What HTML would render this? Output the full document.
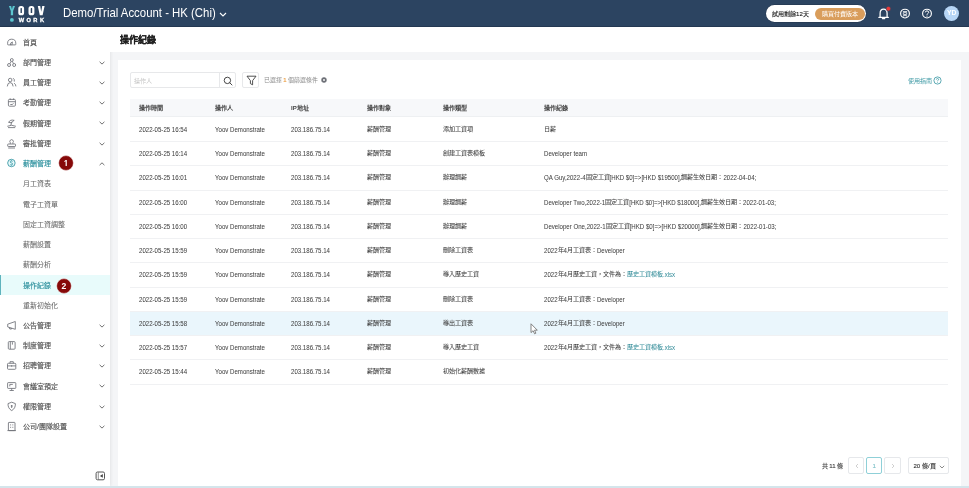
<!DOCTYPE html>
<html lang="zh-HK"><head><meta charset="utf-8">
<style>
*{box-sizing:border-box;margin:0;padding:0}
html,body{width:969px;height:488px;overflow:hidden;background:#f4f5f7;font-family:"Liberation Sans",sans-serif;position:relative}
#wrap{position:absolute;left:0;top:0;width:969px;height:488px;will-change:transform}
#hdr{position:absolute;left:0;top:0;width:969px;height:27.2px;background:#2c4461;border-bottom:1px solid #243852}
#side{position:absolute;left:0;top:27px;width:110px;height:459px;background:#fff;box-shadow:1px 0 3px rgba(0,0,0,0.07)}
#bstrip{position:absolute;left:0;top:485.6px;width:969px;height:2.4px;background:#d4e5eb;}
#phdr{position:absolute;left:110px;top:27px;width:859px;height:25px;background:#fff;}
#phdr .tt{position:absolute;left:10px;top:8.1px;font-size:9px;line-height:10px;font-weight:bold;color:#1f1f1f;-webkit-text-stroke:0.2px currentColor}
#card{position:absolute;left:117.5px;top:60.2px;width:843.5px;height:426px;background:#fff;}
.mi{position:absolute;left:0;width:110px;height:20.2px;font-size:7px;font-weight:500;color:#4f4f4f;}
.mi .t{position:absolute;left:23px;top:6.3px;line-height:8px;white-space:nowrap;-webkit-text-stroke:0.14px currentColor}
.mi .ic{position:absolute;left:6px;top:4.1px}
.mi .chev{position:absolute;left:98.5px;top:8px}
.mi.act{color:#2a8f9c}
.mi.sub{color:#6a6a6a}
.mi.sub .t{-webkit-text-stroke:0.05px currentColor}
.mi.sel{background:#e8fbfb;color:#2a8f9c;border-left:1px solid #5fb3bd}
.mi.sel .t{left:22px}
.th{position:absolute;top:98.5px;left:130px;width:818px;height:18.5px;background:#f7f8fa;border-bottom:0.8px solid #eef0f2}
.hc{position:absolute;top:0;line-height:18px;font-size:6.1px;font-weight:bold;color:#454545;white-space:nowrap}
.row{position:absolute;left:130px;width:818px;height:24.27px;border-bottom:1px solid #f0f1f3;background:#fff}
.row.hov{background:#eaf6fc}
.c{position:absolute;top:0;line-height:23.2px;font-size:6.1px;transform:scaleY(1.13);transform-origin:0 11.6px;color:#404040;white-space:nowrap;-webkit-text-stroke:0.03px currentColor}
.c .k{font-style:normal;-webkit-text-stroke:0.06px currentColor;display:inline-block;transform:scaleY(0.885);line-height:7px;vertical-align:1px}
.lk{color:#3a909c}
.badge{position:absolute;width:15px;height:15px;border-radius:50%;background:#8a0f10;color:#fff;font-size:8.5px;font-weight:bold;text-align:center;line-height:15px}

#hdr .ttl{position:absolute;left:63px;top:6.5px;font-size:11.4px;line-height:13px;color:#fff;white-space:nowrap;transform:scaleY(1.07);transform-origin:0 6.5px}
.pill{position:absolute;left:765.8px;top:5px;width:100px;box-shadow:0 0 0 0.5px #22344c;height:17px;border-radius:9px;background:#fff}
.pill .pt{position:absolute;left:6.3px;top:4.5px;-webkit-text-stroke:0.12px currentColor;font-size:6.1px;line-height:7px;color:#222;white-space:nowrap}
.pill .pb{position:absolute;left:49.3px;top:3px;width:49.5px;height:11.5px;border-radius:6px;background:#d99d5b;color:#fff;font-size:6.1px;line-height:11.5px;text-align:center;white-space:nowrap}
.av{position:absolute;left:944.3px;top:6.2px;width:14.8px;height:14.8px;border-radius:50%;background:#b6d5f5;color:#fff;font-size:6.8px;font-weight:bold;line-height:14.8px;text-align:center}

.inp{position:absolute;left:129.8px;top:72.2px;width:106.2px;height:16.2px;border:0.8px solid #e7e8ea;border-radius:2px;background:#fff}
.inp .ph{position:absolute;left:3.6px;top:3.6px;font-size:6.1px;line-height:7px;color:#c4c4c4;white-space:nowrap}
.inp .sb{position:absolute;left:88.7px;top:0;width:16.7px;height:14.6px;border-left:0.8px solid #e7e8ea}
.fb{position:absolute;left:242.3px;top:72.2px;width:16.8px;height:16.2px;border:0.8px solid #e7e8ea;border-radius:2px;background:#fff}
.flt{position:absolute;left:263.7px;top:76.6px;font-size:5.9px;line-height:7px;color:#8c8c8c;white-space:nowrap}
.guide{position:absolute;left:907.8px;top:76.8px;font-size:6.1px;line-height:7px;color:#3f9aa5;white-space:nowrap}

.pg{position:absolute;font-size:6.1px;line-height:7px;white-space:nowrap}
.pbx{position:absolute;top:457.4px;width:16.2px;height:16.3px;border:0.8px solid #e6e8eb;border-radius:2px;background:#fff}
.pbx span{position:absolute;left:0;right:0;top:3.9px;-webkit-text-stroke:0.1px currentColor;text-align:center;font-size:6.1px;line-height:7px;white-space:nowrap}
.pbx.cur{border-color:#8fd0d8}
.pbx.cur span{color:#7ec0c8}
</style></head><body><div id="wrap">

<div id="hdr">
 <svg style="position:absolute;left:0;top:0" width="50" height="27" viewBox="0 0 50 27">
  <path d="M8.9 5.9 H11.1 L11.95 9.3 L12.8 5.9 H15 L13.1 11.0 V15.3 H10.8 V11.0 Z" fill="#5cc6cf"/>
  <rect x="19.4" y="7.0" width="3.6" height="7.2" rx="1.5" fill="none" stroke="#fff" stroke-width="2.2"/>
  <rect x="29.6" y="7.0" width="3.7" height="7.2" rx="1.5" fill="none" stroke="#fff" stroke-width="2.2"/>
  <path d="M37.8 5.9 H40.2 L41.2 11.8 L42.2 5.9 H44.6 L42.6 15.3 H39.8 Z" fill="#fff"/>
  <circle cx="11.9" cy="19.9" r="1.9" fill="#5cc6cf"/>
  <text x="18.7" y="22" font-family="Liberation Sans" font-weight="bold" font-size="5.7" fill="#fff" stroke="#fff" stroke-width="0.3" textLength="25.3" lengthAdjust="spacing">WORK</text>
 </svg>
 <span class="ttl">Demo/Trial Account - HK (Chi)</span>
 <svg style="position:absolute;left:219.3px;top:11.5px" width="8" height="5" viewBox="0 0 8 5"><path d="M1 1 L4 4 L7 1" fill="none" stroke="#fff" stroke-width="1.1"/></svg>
 <div class="pill"><span class="pt">試用剩餘12天</span><span class="pb">購買付費版本</span></div>
 <svg style="position:absolute;left:876px;top:5px" width="16" height="16" viewBox="0 0 16 16">
  <path d="M2.9 12.4 H12.3 M4.1 12.2 V8.4 Q4.1 4.2 7.6 4.2 Q11.1 4.2 11.1 8.4 V12.2 M6.4 13.6 H8.8" fill="none" stroke="#fff" stroke-width="1.25" stroke-linecap="round" stroke-linejoin="round"/>
  <circle cx="12.4" cy="3.7" r="2.3" fill="#e83b3b" stroke="#2c4461" stroke-width="0.5"/>
 </svg>
 <svg style="position:absolute;left:899px;top:8px" width="12" height="12" viewBox="0 0 12 12">
  <circle cx="6" cy="5.6" r="4.4" fill="none" stroke="#fff" stroke-width="1.15"/>
  <path d="M3.9 3.5 H8.1 M4.3 4.6 H7.7 V6.4 H4.3 Z M6 6.4 V7.4 M4.1 7.6 H7.9 M4.6 8 L4.2 8.6 M7.4 8 L7.8 8.6" fill="none" stroke="#fff" stroke-width="0.75"/>
 </svg>
 <svg style="position:absolute;left:921.4px;top:8px" width="12" height="12" viewBox="0 0 12 12">
  <circle cx="6" cy="5.6" r="4.4" fill="none" stroke="#fff" stroke-width="1.15"/>
  <path d="M4.3 4.4 Q4.3 2.9 6 2.9 Q7.7 2.9 7.7 4.3 Q7.7 5.2 6.7 5.6 Q6 5.9 6 6.8" fill="none" stroke="#fff" stroke-width="1"/>
  <circle cx="6" cy="8.1" r="0.6" fill="#fff"/>
 </svg>
 <div class="av">YD</div>
</div>

<div id="side">
</div>
<div id="sidebox" style="position:absolute;left:0;top:0">
<div class="mi" style="top:32.50px"><svg class="ic" width="11" height="11" viewBox="0 0 11 11"><path d="M1.6 7.3 V6.3 A4.1 4.1 0 0 1 9.8 6.3 V7.3 Q9.8 7.9 9.2 7.9 H2.2 Q1.6 7.9 1.6 7.3 Z" fill="none" stroke="#6e7077" stroke-width="0.85" stroke-linejoin="round"/><path d="M4.3 7.8 Q4.3 5.2 6.2 5.0 M5.9 7.8 L6.4 5.6" fill="none" stroke="#6e7077" stroke-width="0.85" stroke-linecap="round"/></svg><span class="t">首頁</span></div>
<div class="mi" style="top:52.73px"><svg class="ic" width="11" height="11" viewBox="0 0 11 11"><circle cx="5.8" cy="3.0" r="1.45" fill="none" stroke="#6e7077" stroke-width="0.85"/><circle cx="3.05" cy="8.0" r="1.5" fill="none" stroke="#6e7077" stroke-width="0.85"/><circle cx="8.15" cy="8.0" r="1.5" fill="none" stroke="#6e7077" stroke-width="0.85"/><path d="M5.1 4.3 L4.1 6.6 M6.5 4.3 L7.3 6.6" stroke="#6e7077" stroke-width="0.8"/></svg><span class="t">部門管理</span><svg class="chev" width="6" height="4" viewBox="0 0 6 4"><path d="M0.6 0.8 L3 3.1 L5.4 0.8" fill="none" stroke="#6a6a6a" stroke-width="0.95"/></svg></div>
<div class="mi" style="top:72.96px"><svg class="ic" width="11" height="11" viewBox="0 0 11 11"><circle cx="4.2" cy="3.0" r="1.75" fill="none" stroke="#6e7077" stroke-width="0.85"/><path d="M1.3 9.4 Q1.5 5.6 4.2 5.6 Q6.9 5.6 7.1 9.4" fill="none" stroke="#6e7077" stroke-width="0.85"/><path d="M7.1 1.2 Q8.7 1.9 8.3 4.6 M8.1 6.2 Q9.8 7 9.9 9.4" fill="none" stroke="#6e7077" stroke-width="0.85"/></svg><span class="t">員工管理</span><svg class="chev" width="6" height="4" viewBox="0 0 6 4"><path d="M0.6 0.8 L3 3.1 L5.4 0.8" fill="none" stroke="#6a6a6a" stroke-width="0.95"/></svg></div>
<div class="mi" style="top:93.19px"><svg class="ic" width="11" height="11" viewBox="0 0 11 11"><rect x="2.4" y="2.4" width="7" height="6.8" rx="1" fill="none" stroke="#6e7077" stroke-width="0.85"/><path d="M2.4 4.7 H9.4 M4.2 1.4 V3 M7.6 1.4 V3 M4.3 7.5 H6.4 L7.4 6.3" fill="none" stroke="#6e7077" stroke-width="0.85"/></svg><span class="t">考勤管理</span><svg class="chev" width="6" height="4" viewBox="0 0 6 4"><path d="M0.6 0.8 L3 3.1 L5.4 0.8" fill="none" stroke="#6a6a6a" stroke-width="0.95"/></svg></div>
<div class="mi" style="top:113.42px"><svg class="ic" width="11" height="11" viewBox="0 0 11 11"><path d="M2.6 4.4 Q4.2 1.2 8.2 2.4 Q6.4 3 5.8 4.8 Z" fill="none" stroke="#6e7077" stroke-width="0.85"/><path d="M5.6 3.8 L4.9 7.2" stroke="#6e7077" stroke-width="0.85"/><path d="M1.3 8.3 Q5.5 6.2 9.9 8.3 M2 9.6 H9.2" fill="none" stroke="#6e7077" stroke-width="0.85"/></svg><span class="t">假期管理</span><svg class="chev" width="6" height="4" viewBox="0 0 6 4"><path d="M0.6 0.8 L3 3.1 L5.4 0.8" fill="none" stroke="#6a6a6a" stroke-width="0.95"/></svg></div>
<div class="mi" style="top:133.65px"><svg class="ic" width="11" height="11" viewBox="0 0 11 11"><path d="M4.3 5.8 V4.6 A1.75 1.75 0 1 1 6.9 4.6 V5.8" fill="none" stroke="#6e7077" stroke-width="0.85"/><rect x="1.7" y="6" width="7.8" height="2.5" rx="0.6" fill="none" stroke="#6e7077" stroke-width="0.85"/><path d="M2.2 10 H9" stroke="#6e7077" stroke-width="0.85"/></svg><span class="t">審批管理</span><svg class="chev" width="6" height="4" viewBox="0 0 6 4"><path d="M0.6 0.8 L3 3.1 L5.4 0.8" fill="none" stroke="#6a6a6a" stroke-width="0.95"/></svg></div>
<div class="mi act" style="top:153.88px"><svg class="ic" width="11" height="11" viewBox="0 0 11 11"><circle cx="5.4" cy="5.0" r="3.75" fill="#e6f8fa" stroke="#2a8f9c" stroke-width="0.8"/><path d="M6.6 3.5 Q6.3 3 5.4 3 Q4.3 3 4.3 3.9 Q4.3 4.7 5.4 4.9 Q6.6 5.1 6.6 6 Q6.5 6.9 5.4 6.9 Q4.5 6.9 4.2 6.4 M5.4 2.3 V3 M5.4 6.9 V7.6" fill="none" stroke="#2a8f9c" stroke-width="0.75"/></svg><span class="t">薪酬管理</span><svg class="chev" width="6" height="4" viewBox="0 0 6 4"><path d="M0.6 3.1 L3 0.8 L5.4 3.1" fill="none" stroke="#6a6a6a" stroke-width="0.95"/></svg></div>
<div class="mi sub" style="top:174.11px"><span class="t">月工資表</span></div>
<div class="mi sub" style="top:194.34px"><span class="t">電子工資單</span></div>
<div class="mi sub" style="top:214.57px"><span class="t">固定工資調整</span></div>
<div class="mi sub" style="top:234.80px"><span class="t">薪酬設置</span></div>
<div class="mi sub" style="top:255.03px"><span class="t">薪酬分析</span></div>
<div class="mi sel" style="top:275.26px"><span class="t">操作紀錄</span></div>
<div class="mi sub" style="top:295.49px"><span class="t">重新初始化</span></div>
<div class="mi" style="top:315.72px"><svg class="ic" width="11" height="11" viewBox="0 0 11 11"><path d="M1.7 4.2 L9.3 1.5 V9.3 L1.7 6.9 Z" fill="none" stroke="#6e7077" stroke-width="0.85" stroke-linejoin="round"/><path d="M3.2 7.4 L3.8 9.0 H5.5 L5.1 8" fill="none" stroke="#6e7077" stroke-width="0.85" stroke-linejoin="round"/></svg><span class="t">公告管理</span><svg class="chev" width="6" height="4" viewBox="0 0 6 4"><path d="M0.6 0.8 L3 3.1 L5.4 0.8" fill="none" stroke="#6a6a6a" stroke-width="0.95"/></svg></div>
<div class="mi" style="top:335.95px"><svg class="ic" width="11" height="11" viewBox="0 0 11 11"><rect x="2.3" y="1.6" width="6.8" height="7.6" rx="0.9" fill="none" stroke="#6e7077" stroke-width="0.85"/><path d="M4.3 1.6 V9.2 M6.4 2.2 V4.6" stroke="#6e7077" stroke-width="0.85"/></svg><span class="t">制度管理</span><svg class="chev" width="6" height="4" viewBox="0 0 6 4"><path d="M0.6 0.8 L3 3.1 L5.4 0.8" fill="none" stroke="#6a6a6a" stroke-width="0.95"/></svg></div>
<div class="mi" style="top:356.18px"><svg class="ic" width="11" height="11" viewBox="0 0 11 11"><rect x="1.5" y="3.3" width="8.3" height="6" rx="0.9" fill="none" stroke="#6e7077" stroke-width="0.85"/><path d="M4 3.3 V1.7 H7.3 V3.3 M1.5 5.9 H9.8 M5.65 5.2 V6.7" fill="none" stroke="#6e7077" stroke-width="0.85"/></svg><span class="t">招聘管理</span><svg class="chev" width="6" height="4" viewBox="0 0 6 4"><path d="M0.6 0.8 L3 3.1 L5.4 0.8" fill="none" stroke="#6a6a6a" stroke-width="0.95"/></svg></div>
<div class="mi" style="top:376.41px"><svg class="ic" width="11" height="11" viewBox="0 0 11 11"><rect x="1.6" y="1.6" width="8.2" height="5.8" rx="0.6" fill="none" stroke="#6e7077" stroke-width="0.85"/><path d="M5.7 7.4 V9.4 M3.6 9.5 H7.8 M3.8 5.4 V3.4 H6.8" fill="none" stroke="#6e7077" stroke-width="0.85"/></svg><span class="t">會議室預定</span><svg class="chev" width="6" height="4" viewBox="0 0 6 4"><path d="M0.6 0.8 L3 3.1 L5.4 0.8" fill="none" stroke="#6a6a6a" stroke-width="0.95"/></svg></div>
<div class="mi" style="top:396.64px"><svg class="ic" width="11" height="11" viewBox="0 0 11 11"><path d="M5.7 1.2 L9.4 2.6 Q9.6 7.4 5.7 9.6 Q1.8 7.4 2 2.6 Z" fill="none" stroke="#6e7077" stroke-width="0.85" stroke-linejoin="round"/><circle cx="5.7" cy="4.9" r="0.95" fill="#6e7077"/><path d="M5.7 5.4 V7" stroke="#6e7077" stroke-width="0.9"/></svg><span class="t">權限管理</span><svg class="chev" width="6" height="4" viewBox="0 0 6 4"><path d="M0.6 0.8 L3 3.1 L5.4 0.8" fill="none" stroke="#6a6a6a" stroke-width="0.95"/></svg></div>
<div class="mi" style="top:416.87px"><svg class="ic" width="11" height="11" viewBox="0 0 11 11"><rect x="2.4" y="1.4" width="6.6" height="8.2" rx="0.6" fill="none" stroke="#6e7077" stroke-width="0.85"/><path d="M4.6 3.4 V4.4 M6.8 3.4 V4.4 M4.6 5.8 V6.8 M6.8 5.8 V6.8 M1.4 9.6 H10" fill="none" stroke="#6e7077" stroke-width="0.85"/></svg><span class="t">公司/團隊設置</span><svg class="chev" width="6" height="4" viewBox="0 0 6 4"><path d="M0.6 0.8 L3 3.1 L5.4 0.8" fill="none" stroke="#6a6a6a" stroke-width="0.95"/></svg></div>
</div>
<div id="phdr"><span class="tt">操作紀錄</span></div>
<div id="card"></div>
<div class="inp"><span class="ph">操作人</span><div class="sb"><svg width="10" height="10" viewBox="0 0 10 10" style="position:absolute;left:3px;top:3px"><circle cx="4.4" cy="4.4" r="3.2" fill="none" stroke="#333" stroke-width="0.9"/><path d="M6.8 6.8 L9 9" stroke="#333" stroke-width="0.9" stroke-linecap="round"/></svg></div></div>
<div class="fb"><svg width="11" height="11" viewBox="0 0 11 11" style="position:absolute;left:2.4px;top:2.2px"><path d="M1 1.2 H10 L6.6 5.6 V9.8 L4.4 8.6 V5.6 Z" fill="none" stroke="#333" stroke-width="0.85" stroke-linejoin="round"/></svg></div>
<span class="flt">已選擇 <span style="color:#eda24a;-webkit-text-stroke:0.2px #eda24a">1</span> 個篩選條件</span>
<svg style="position:absolute;left:321px;top:77.3px" width="6" height="6" viewBox="0 0 6 6"><circle cx="3" cy="3" r="2.7" fill="#6b6e75"/><path d="M1.9 1.9 L4.1 4.1 M4.1 1.9 L1.9 4.1" stroke="#fff" stroke-width="0.7"/></svg>
<span class="guide">使用指南</span>
<svg style="position:absolute;left:932.6px;top:75.5px" width="9" height="9" viewBox="0 0 9 9"><circle cx="4.5" cy="4.5" r="3.6" fill="none" stroke="#2a8f9c" stroke-width="0.75"/><path d="M3.4 3.6 Q3.4 2.5 4.5 2.5 Q5.6 2.5 5.6 3.5 Q5.6 4.1 4.9 4.4 Q4.5 4.6 4.5 5.2" fill="none" stroke="#2a8f9c" stroke-width="0.7"/><circle cx="4.5" cy="6.3" r="0.45" fill="#2a8f9c"/></svg>
<div class="th"><span class="hc" style="left:9px">操作時間</span><span class="hc" style="left:85px">操作人</span><span class="hc" style="left:161px">IP地址</span><span class="hc" style="left:237px">操作對象</span><span class="hc" style="left:313px">操作類型</span><span class="hc" style="left:414px">操作紀錄</span></div>
<div class="row" style="top:117.70px"><span class="c" style="left:9px">2022-05-25 16:54</span><span class="c" style="left:85px">Yoov Demonstrate</span><span class="c" style="left:161px">203.186.75.14</span><span class="c" style="left:237px"><i class="k">薪酬管理</i></span><span class="c" style="left:313px"><i class="k">添加工資項</i></span><span class="c" style="left:414px"><i class="k">日薪</i></span></div>
<div class="row" style="top:141.97px"><span class="c" style="left:9px">2022-05-25 16:14</span><span class="c" style="left:85px">Yoov Demonstrate</span><span class="c" style="left:161px">203.186.75.14</span><span class="c" style="left:237px"><i class="k">薪酬管理</i></span><span class="c" style="left:313px"><i class="k">創建工資表模板</i></span><span class="c" style="left:414px">Developer team</span></div>
<div class="row" style="top:166.24px"><span class="c" style="left:9px">2022-05-25 16:01</span><span class="c" style="left:85px">Yoov Demonstrate</span><span class="c" style="left:161px">203.186.75.14</span><span class="c" style="left:237px"><i class="k">薪酬管理</i></span><span class="c" style="left:313px"><i class="k">辦理調薪</i></span><span class="c" style="left:414px">QA Guy,2022-4<i class="k">固定工資</i>[HKD $0]=&gt;[HKD $19500],<i class="k">調薪生效日期：</i>2022-04-04;</span></div>
<div class="row" style="top:190.51px"><span class="c" style="left:9px">2022-05-25 16:00</span><span class="c" style="left:85px">Yoov Demonstrate</span><span class="c" style="left:161px">203.186.75.14</span><span class="c" style="left:237px"><i class="k">薪酬管理</i></span><span class="c" style="left:313px"><i class="k">辦理調薪</i></span><span class="c" style="left:414px">Developer Two,2022-1<i class="k">固定工資</i>[HKD $0]=&gt;[HKD $18000],<i class="k">調薪生效日期：</i>2022-01-03;</span></div>
<div class="row" style="top:214.78px"><span class="c" style="left:9px">2022-05-25 16:00</span><span class="c" style="left:85px">Yoov Demonstrate</span><span class="c" style="left:161px">203.186.75.14</span><span class="c" style="left:237px"><i class="k">薪酬管理</i></span><span class="c" style="left:313px"><i class="k">辦理調薪</i></span><span class="c" style="left:414px">Developer One,2022-1<i class="k">固定工資</i>[HKD $0]=&gt;[HKD $20000],<i class="k">調薪生效日期：</i>2022-01-03;</span></div>
<div class="row" style="top:239.05px"><span class="c" style="left:9px">2022-05-25 15:59</span><span class="c" style="left:85px">Yoov Demonstrate</span><span class="c" style="left:161px">203.186.75.14</span><span class="c" style="left:237px"><i class="k">薪酬管理</i></span><span class="c" style="left:313px"><i class="k">刪除工資表</i></span><span class="c" style="left:414px">2022<i class="k">年</i>4<i class="k">月工資表：</i>Developer</span></div>
<div class="row" style="top:263.32px"><span class="c" style="left:9px">2022-05-25 15:59</span><span class="c" style="left:85px">Yoov Demonstrate</span><span class="c" style="left:161px">203.186.75.14</span><span class="c" style="left:237px"><i class="k">薪酬管理</i></span><span class="c" style="left:313px"><i class="k">導入歷史工資</i></span><span class="c" style="left:414px">2022<i class="k">年</i>4<i class="k">月歷史工資，文件為：</i><span class="lk"><i class="k">歷史工資模板</i>.xlsx</span></span></div>
<div class="row" style="top:287.59px"><span class="c" style="left:9px">2022-05-25 15:59</span><span class="c" style="left:85px">Yoov Demonstrate</span><span class="c" style="left:161px">203.186.75.14</span><span class="c" style="left:237px"><i class="k">薪酬管理</i></span><span class="c" style="left:313px"><i class="k">刪除工資表</i></span><span class="c" style="left:414px">2022<i class="k">年</i>4<i class="k">月工資表：</i>Developer</span></div>
<div class="row hov" style="top:311.86px"><span class="c" style="left:9px">2022-05-25 15:58</span><span class="c" style="left:85px">Yoov Demonstrate</span><span class="c" style="left:161px">203.186.75.14</span><span class="c" style="left:237px"><i class="k">薪酬管理</i></span><span class="c" style="left:313px"><i class="k">導出工資表</i></span><span class="c" style="left:414px">2022<i class="k">年</i>4<i class="k">月工資表：</i>Developer</span></div>
<div class="row" style="top:336.13px"><span class="c" style="left:9px">2022-05-25 15:57</span><span class="c" style="left:85px">Yoov Demonstrate</span><span class="c" style="left:161px">203.186.75.14</span><span class="c" style="left:237px"><i class="k">薪酬管理</i></span><span class="c" style="left:313px"><i class="k">導入歷史工資</i></span><span class="c" style="left:414px">2022<i class="k">年</i>4<i class="k">月歷史工資，文件為：</i><span class="lk"><i class="k">歷史工資模板</i>.xlsx</span></span></div>
<div class="row" style="top:360.40px"><span class="c" style="left:9px">2022-05-25 15:44</span><span class="c" style="left:85px">Yoov Demonstrate</span><span class="c" style="left:161px">203.186.75.14</span><span class="c" style="left:237px"><i class="k">薪酬管理</i></span><span class="c" style="left:313px"><i class="k">初始化薪酬數據</i></span><span class="c" style="left:414px"></span></div>
<svg style="position:absolute;left:58.1px;top:154.5px" width="16" height="16" viewBox="0 0 16 16"><circle cx="8" cy="8" r="7.4" fill="#860909" stroke="#fff" stroke-width="0.5"/><path d="M6.2 6.2 L7.7 4.9 H8.8 V10.9 H7.6 V6.3 L6.6 7.1 Z" fill="#fff"/></svg>
<svg style="position:absolute;left:56.2px;top:278.1px" width="16" height="16" viewBox="0 0 16 16"><circle cx="8" cy="8" r="7.4" fill="#860909" stroke="#fff" stroke-width="0.5"/><text x="8" y="11.3" text-anchor="middle" font-family="Liberation Sans" font-weight="bold" font-size="8.6" fill="#fff">2</text></svg>
<div id="bstrip"></div>
<span class="pg" style="left:821.5px;top:462px;color:#444;-webkit-text-stroke:0.12px currentColor">共 11 條</span>
<div class="pbx" style="left:848.3px"><svg width="16" height="16" viewBox="0 0 16 16" style="position:absolute;left:-0.8px;top:-0.8px"><path d="M9 6 L7 8 L9 10" fill="none" stroke="#c4c4c4" stroke-width="0.8"/></svg></div>
<div class="pbx cur" style="left:866.2px"><span>1</span></div>
<div class="pbx" style="left:884.4px"><svg width="16" height="16" viewBox="0 0 16 16" style="position:absolute;left:-0.8px;top:-0.8px"><path d="M7 6 L9 8 L7 10" fill="none" stroke="#c4c4c4" stroke-width="0.8"/></svg></div>
<div class="pbx" style="left:908.2px;width:40.4px"><span style="left:4.3px;color:#333;text-align:left">20 條/頁</span><svg width="6" height="4" viewBox="0 0 6 4" style="position:absolute;left:29.6px;top:6.3px"><path d="M0.8 0.8 L3 3 L5.2 0.8" fill="none" stroke="#777" stroke-width="0.85"/></svg></div>
<svg style="position:absolute;left:94.5px;top:471px" width="10.5" height="10" viewBox="0 0 10.5 10"><rect x="1.1" y="1" width="8.4" height="7.8" rx="1.4" fill="none" stroke="#555" stroke-width="1"/><path d="M3.3 1.2 V8.6" stroke="#666" stroke-width="0.7"/><path d="M7.8 3.1 L4.9 4.9 L7.8 6.7 Z" fill="#444"/></svg>
<svg style="position:absolute;left:530px;top:322.5px" width="9" height="12" viewBox="0 0 9 12"><path d="M1 0.8 V9.6 L3.1 7.7 L4.6 10.8 L5.9 10.2 L4.5 7.2 H7.3 Z" fill="#fff" stroke="#777" stroke-width="0.9" stroke-linejoin="round"/></svg>
</div></body></html>
